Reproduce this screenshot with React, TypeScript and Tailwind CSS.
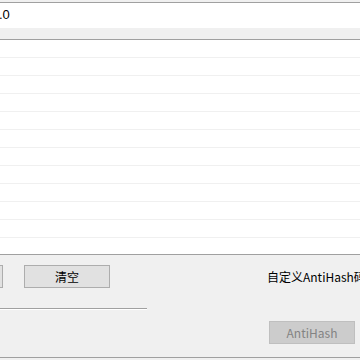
import React from "react";

const ROWS = Array.from({ length: 11 }, (_, i) => i);

export default function App() {
  return (
    <div className="w-[360px] h-[360px] overflow-hidden bg-[#f0f0f0] font-['Noto_Sans_CJK_SC',sans-serif] text-[12px] text-black">
      <div className="h-[2px]" />
      {/* text box */}
      <div className="h-[26px] bg-white border-t border-[#a0a0a0] flex items-center">
        <span className="font-['Liberation_Sans',sans-serif] text-[13px] leading-none -ml-[1px] pb-[2px]">.0</span>
      </div>
      <div className="h-[11px]" />
      {/* list view */}
      <div className="h-[216px] bg-white border-y border-[#a0a0a0] flex flex-col">
        {ROWS.map((r) => (
          <div key={r} className="h-[18px] shrink-0 border-b border-[#f0f0f0]" />
        ))}
      </div>
      {/* bottom panel */}
      <div className="pt-[10px]">
        <div className="flex items-center h-[23px] whitespace-nowrap">
          <button className="shrink-0 -ml-[83px] w-[86px] h-[23px] bg-[#e1e1e1] border border-[#adadad]" />
          <button className="shrink-0 ml-[21px] w-[86px] h-[23px] bg-[#e1e1e1] border border-[#adadad] text-[12px] leading-none">
            清空
          </button>
          <span className="shrink-0 ml-[157px] text-[12px] leading-none">自定义AntiHash码</span>
        </div>
        <div className="mt-[20px] w-[147px] h-[2px] border-t border-[#a0a0a0] border-b border-b-white" />
        <button
          disabled
          className="block mt-[11px] ml-[269px] w-[86px] h-[23px] bg-[#cccccc] border border-[#bfbfbf] text-[#838383] text-[12px] leading-none"
        >
          AntiHash
        </button>
        <div className="mt-[13px] h-[1px] bg-[#a0a0a0]" />
      </div>
    </div>
  );
}
